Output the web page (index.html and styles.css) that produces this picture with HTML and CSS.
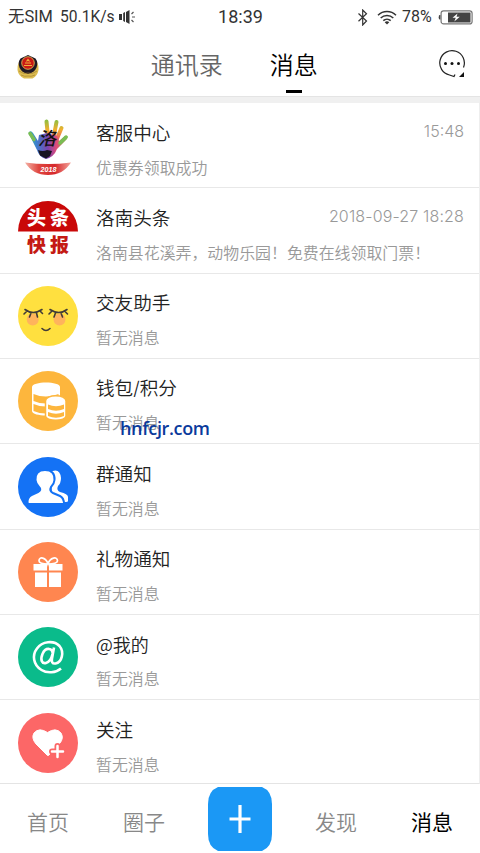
FILE: index.html
```html
<!DOCTYPE html>
<html lang="zh-CN">
<head>
<meta charset="utf-8">
<meta name="viewport" content="width=device-width">
<title>消息</title>
<link rel="stylesheet" href="styles.css">
</head>
<body>
<div class="app">
  <div class="status">
    <div class="status-left">
      <span class="carrier">无SIM</span><span class="speed">50.1K/s</span>
      <svg class="speaker" width="17" height="14" viewBox="0 0 17 14"><path d="M0 4h3v6H0zM4.200 3l1.800-1v10l-1.800-1zM7 2l3.500-2v14L7 12z" fill="#333"/><path d="M12.500 4l2-2M13 7h3M12.500 10l2 2" stroke="#555" stroke-width="1.200"/></svg>
    </div>
    <div class="clock">18:39</div>
    <div class="status-right">
      <svg class="bt" width="10" height="17" viewBox="0 0 10 17"><path d="M0.500 4.500l8 7.500-3.800 4V1l3.800 3.700-8 7.500" fill="none" stroke="#333" stroke-width="1.200"/></svg>
      <svg class="wifi" width="20" height="15" viewBox="0 0 20 15"><path d="M1 5.200a13 13 0 0 1 18 0M3.700 8a9 9 0 0 1 12.600 0M6.300 10.600a5.400 5.400 0 0 1 7.400 0" fill="none" stroke="#333" stroke-width="1.500"/><path d="M7.700 12.200a3.400 3.400 0 0 1 4.600 0L10 14.500z" fill="#333"/></svg>
      <span class="percent">78%</span>
      <svg class="battery" width="35" height="15" viewBox="0 0 35 15"><path d="M2.500 5H1.700Q.7 5 .7 7.200t1 2.300h.8z" fill="#444"/><rect x="3.100" y=".9" width="31" height="13" rx="2.500" fill="#fff" stroke="#777" stroke-width="1.200"/><rect x="10" y="2.500" width="22.500" height="10" fill="#444"/><path d="M19.500 3.500l-5 4.200h3.300l-1.500 3.800 5.500-4.800h-3.300z" fill="#fff"/></svg>
    </div>
  </div>

  <header class="header">
    <svg class="badge" width="24" height="26" viewBox="0 0 24 26"><path d="M3 8Q1 12 1.500 16q1 6 6.500 8.500h8.500q5-2.500 6-8.500Q23 12 21 8z" fill="#dcbc50"/><path d="M4.500 4.500L12 1l7.500 3.500q3 4 1 9-2 5-8.500 6.500Q5.500 18.500 3.500 13.500q-2-5 1-9z" fill="#201824"/><circle cx="12" cy="9" r="6.300" fill="#c91915" stroke="#e9c45a" stroke-width=".8"/><path d="M8 11.500h8M9 9h6M10.500 7.500L12 5.500l1.500 2" stroke="#efb03a" stroke-width="1.200" fill="none"/><path d="M3 17q5 4 9 2 4 2 9-2M5 21q4 2 7 1 3 1 7-1" stroke="#a58231" stroke-width=".7" fill="none"/></svg>
    <div class="tab">通讯录</div>
    <div class="tab tab-active">消息</div>
    <svg class="chat" width="28" height="28" viewBox="0 0 28 28"><path d="M17 24.400l-1 2.200L11.500 25A12.300 12.300 0 1 1 25.500 17.500" fill="none" stroke="#222" stroke-width="1.200"/><g fill="#111"><circle cx="7.500" cy="13.500" r="1.500"/><circle cx="14" cy="13.500" r="1.500"/><circle cx="20.500" cy="13.500" r="1.500"/><path d="M26 22v5h-5z"/></g></svg>
  </header>

  <main class="list">
    <div class="row">
      <svg class="icon" viewBox="0 0 60 60">
        <defs>
          <linearGradient id="hand" x1="0" y1="0" x2="1" y2="0"><stop offset="0" stop-color="#38b5a5"/><stop offset=".2" stop-color="#3c7fce"/><stop offset=".5" stop-color="#7e42ad"/><stop offset=".72" stop-color="#e34c76"/><stop offset="1" stop-color="#7fbf45"/></linearGradient>
          <linearGradient id="tips" gradientUnits="userSpaceOnUse" x1="0" y1="3" x2="0" y2="24"><stop offset="0" stop-color="#81c044"/><stop offset=".5" stop-color="#f1b02f"/><stop offset="1" stop-color="#e75a61"/></linearGradient>
          <linearGradient id="bowl" x1="0" y1="0" x2="1" y2="0"><stop offset="0" stop-color="#f4b2a6"/><stop offset=".3" stop-color="#df463f"/><stop offset=".65" stop-color="#d5282c"/><stop offset="1" stop-color="#f4a59b"/></linearGradient>
        </defs>
        <path d="M28.500 5.500l1.500 15M38.500 6l-3 16M43.500 12L38 25" stroke="url(#tips)" stroke-width="4" stroke-linecap="round"/>
        <path d="M11 16q2-2 4 1l5 8 1-6 8-2 10 3 2 5 6-5q4-1 2 3L39 33q-3 8-11 10-7-2-9-9L12 20q-2-3-1-4z" fill="url(#hand)"/>
        <path d="M12 17.500l4 6M48 21l-6 6" stroke="#79bd54" stroke-width="3.500" stroke-linecap="round"/>
        <path d="M20 34q5 2 9 0l5 1-2 5-4 2.500-6-3z" fill="#181421"/>
        <text x="20" y="28.500" class="hand-text">洛</text>
        <path d="M7 46.500q23 3 46 0-8 12.500-23 12.500T7 46.500z" fill="url(#bowl)"/>
        <text x="22.500" y="55.500" class="year" textLength="16" lengthAdjust="spacingAndGlyphs">2018</text>
      </svg>
      <div class="body"><div class="line"><span class="title">客服中心</span><span class="time">15:48</span></div><div class="sub">优惠券领取成功</div></div>
    </div>
    <div class="row">
      <svg class="icon" viewBox="0 0 60 60"><path d="M0 30.500a30 30.500 0 0 1 60 0z" fill="#c90808"/><text x="9" y="23.500" class="news" fill="#fff" textLength="42">头条</text><text x="9" y="50.500" class="news" fill="#c41a14" textLength="42">快报</text></svg>
      <div class="body"><div class="line"><span class="title">洛南头条</span><span class="time time-full">2018-09-27 18:28</span></div><div class="sub">洛南县花溪弄，动物乐园！免费在线领取门票！</div></div>
    </div>
    <div class="row">
      <svg class="icon" viewBox="0 0 60 60"><circle cx="30" cy="30" r="30" fill="#ffe03f"/><circle cx="14.700" cy="33.500" r="6" fill="#ffb45c"/><circle cx="41.500" cy="33.500" r="6" fill="#ffb45c"/><path d="M7 23.500q8 6 17 0M32 23.500q9 6 17 0M9 25l-3 3M13 27l-1.500 4M18.500 27l1 4M22 25l2.500 2.500M34 25l-3 3M37.500 27l-1.500 4M43 27l1.500 4M46.500 25l3 3M24 42.500q4 4 8 0" fill="none" stroke="#423c38" stroke-width="1.600" stroke-linecap="round"/></svg>
      <div class="body"><div class="line"><span class="title">交友助手</span></div><div class="sub">暂无消息</div></div>
    </div>
    <div class="row">
      <svg class="icon" viewBox="0 0 60 60"><circle cx="30" cy="30" r="30" fill="#fdb63d"/><path d="M14 16c0-6 28-6 28 0v24c0 6-28 6-28 0z" fill="#fff"/><path d="M15.500 23q12 5 25 0v7q-13 5-25 0zM15.500 33q12 5 25 0v7q-13 5-25 0z" fill="#fdb63d"/><path d="M27.500 30c0-7 20.500-7 20.500 0v15c0 5.500-20.500 5.500-20.500 0z" fill="#fff" stroke="#fdb63d" stroke-width="1.500"/><path d="M30 33.500q8 3.500 16 0v4.500q-8 3.500-16 0zM30 41q8 3.500 16 0v4q-8 3.500-16 0z" fill="#fdb63d"/></svg>
      <div class="body"><div class="line"><span class="title">钱包/积分</span></div><div class="sub">暂无消息<span class="watermark">hnfcjr.com</span></div></div>
    </div>
    <div class="row">
      <svg class="icon" viewBox="0 0 60 60"><circle cx="30" cy="30" r="30" fill="#1472f5"/><path d="M32 15q10-5 11 6 0 5-3 8-2 4 2 6 8 2 8 5v4q0 1-2 1H35z" fill="#fff"/><path d="M27 13c7 0 10 4 9.500 10q-.3 4-3.500 7-2 4 2 6l7 3q4 2 4 8H11q-1.500 0-1.500-2 0-5 4-7l6.500-3q4-2 1-5-3-3-3.500-7c-.5-6 2.500-10 9.500-10z" fill="#fff" stroke="#1472f5" stroke-width="2"/></svg>
      <div class="body"><div class="line"><span class="title">群通知</span></div><div class="sub">暂无消息</div></div>
    </div>
    <div class="row">
      <svg class="icon" viewBox="0 0 60 60"><circle cx="30" cy="30" r="30" fill="#ff8650"/><path d="M15.500 22h13.500v6.500H15.500zM31 22h13.500v6.500H31zM17 30.500h12V45H17zM31 30.500h12V45H31z" fill="#fff"/><path d="M30 22q-9 0-9-3.200c0-4.800 7-3.300 9 3.200 2-6.500 9.500-8 9.500-3.200Q39.500 22 30 22z" fill="none" stroke="#fff" stroke-width="1.700"/></svg>
      <div class="body"><div class="line"><span class="title">礼物通知</span></div><div class="sub">暂无消息</div></div>
    </div>
    <div class="row">
      <svg class="icon" viewBox="0 0 60 60"><circle cx="30" cy="30" r="30" fill="#0abb8b"/><path d="M43 41.500C38 46 29 46.500 23.500 43 15 38 14 28 19 21.500 24 14 36 13 41.500 19c5 6 2.500 16.500-4 17.500-3.500.5-4-2-3.500-5l2-11M34.500 27c1-6-7-7.500-10 0-2.500 6-.5 10 3.500 9 3.500-1 5.500-4.500 6.500-9z" fill="none" stroke="#fff" stroke-width="2.600"/></svg>
      <div class="body"><div class="line"><span class="title title-at">@我的</span></div><div class="sub">暂无消息</div></div>
    </div>
    <div class="row row-last">
      <svg class="icon" viewBox="0 0 60 60"><circle cx="30" cy="30" r="30" fill="#fc6767"/><path d="M29.500 42.500L18 31q-5-6-2-11 5-6 13.500-.5Q38 14 43 20q3 5-1 10L30.500 42.500z" fill="#fff" stroke="#fff" stroke-width="1"/><path d="M39.500 33v11M34 38.500h11" stroke="#fc6767" stroke-width="6" stroke-linecap="round"/><path d="M39.500 33v11M34 38.500h11" stroke="#fff" stroke-width="2.500" stroke-linecap="round"/></svg>
      <div class="body"><div class="line"><span class="title">关注</span></div><div class="sub">暂无消息</div></div>
    </div>
  </main>

  <nav class="nav">
    <div class="nav-item">首页</div>
    <div class="nav-item">圈子</div>
    <div class="nav-item"><svg class="add" width="64" height="64" viewBox="0 0 64 64"><path d="M10 0H54Q64 4 64 17V47Q64 60 54 64H10Q0 60 0 47V17Q0 4 10 0z" fill="#1b98f5"/><path d="M32 18v28M21.500 32h21" stroke="#fff" stroke-width="3.200"/></svg></div>
    <div class="nav-item">发现</div>
    <div class="nav-item nav-active">消息</div>
  </nav>
</div>
</body>
</html>
```
FILE: styles.css
```css
* { box-sizing: border-box; }

body {
  margin: 0;
  background: #fff;
  color: #222;
  font-family: Inter, "Noto Sans CJK SC", sans-serif;
  font-weight: 350;
}

.app {
  display: flex;
  flex-direction: column;
  width: 480px;
  height: 853px;
  overflow: hidden;
}

.status {
  display: grid;
  grid-template-columns: 1fr auto 1fr;
  align-items: center;
  height: 34px;
  padding: 0 7px 0 8px;
  font-family: Roboto, "Noto Sans CJK SC", sans-serif;
  font-weight: 400;
  color: #333;
  line-height: 34px;
}

.status-left,
.status-right {
  display: flex;
  align-items: center;
}

.status-right { justify-content: flex-end; }
.carrier { width: 52px; font-size: 16.400px; }
.speed { width: 59px; font-size: 15.600px; }
.clock { font-size: 18px; }
.wifi { margin: 0 5px 0 9px; }
.percent { width: 32px; font-size: 16px; }
.battery { margin-left: 4px; }

.header {
  display: flex;
  align-items: center;
  height: 63px;
  padding: 0 14px 0 16px;
  border-bottom: 1px solid #e4e4e4;
}

.badge { margin-top: 3px; }

.tab {
  height: 62px;
  margin-left: 110.700px;
  font-size: 24px;
  line-height: 64px;
  color: #666;
}

.tab-active {
  display: flex;
  flex-direction: column;
  align-items: center;
  margin-left: 47px;
  color: #000;
}

.tab-active::after {
  content: "";
  width: 16px;
  height: 3px;
  margin-top: -8px;
  background: #000;
}

.chat { margin: -2px 0 0 auto; }

.list {
  height: 687px;
  border-top: 6px solid #f0f0f0;
  border-right: 1px solid #eee;
  border-bottom: 1px solid #e4e4e4;
  overflow: hidden;
}

.row {
  display: flex;
  height: 85.330px;
  padding: 12.500px 15px 0 17.500px;
  border-bottom: 1px solid #e8e8e8;
}

.row-last { border-bottom: 0; }

.icon {
  flex: none;
  width: 60px;
  height: 60px;
}

.body {
  flex: 1;
  margin-left: 18.500px;
  white-space: nowrap;
}

.line {
  display: flex;
  justify-content: space-between;
  height: 34px;
  line-height: 35px;
}

.title { font-size: 18.600px; }
.title-at { font-family: "Noto Sans CJK SC", sans-serif; font-size: 18px; }

.time {
  font-size: 16px;
  line-height: 31px;
  color: #999;
}

.time-full { letter-spacing: 0.150px; }

.sub {
  position: relative;
  font-size: 15.920px;
  line-height: 38px;
  color: #999;
}

.watermark {
  position: absolute;
  left: 24px;
  top: 5px;
  font-family: "Open Sans", sans-serif;
  font-size: 18px;
  font-weight: 600;
  line-height: 36px;
  letter-spacing: -0.350px;
  color: #0a3a9c;
}

.hand-text {
  font: italic 500 18px "Noto Sans CJK SC", sans-serif;
  fill: #111;
}

.year {
  font: italic 700 7px "Liberation Sans", sans-serif;
  fill: #fff;
}

.news { font: 900 19px "Noto Sans CJK SC", sans-serif; }

.nav {
  display: grid;
  grid-template-columns: repeat(5, 1fr);
  height: 69px;
  font-size: 21px;
  line-height: 77px;
  color: #888;
  text-align: center;
}

.nav-active { color: #000; font-weight: 400; }

.add {
  display: block;
  margin: 3px auto 0;
}
```
